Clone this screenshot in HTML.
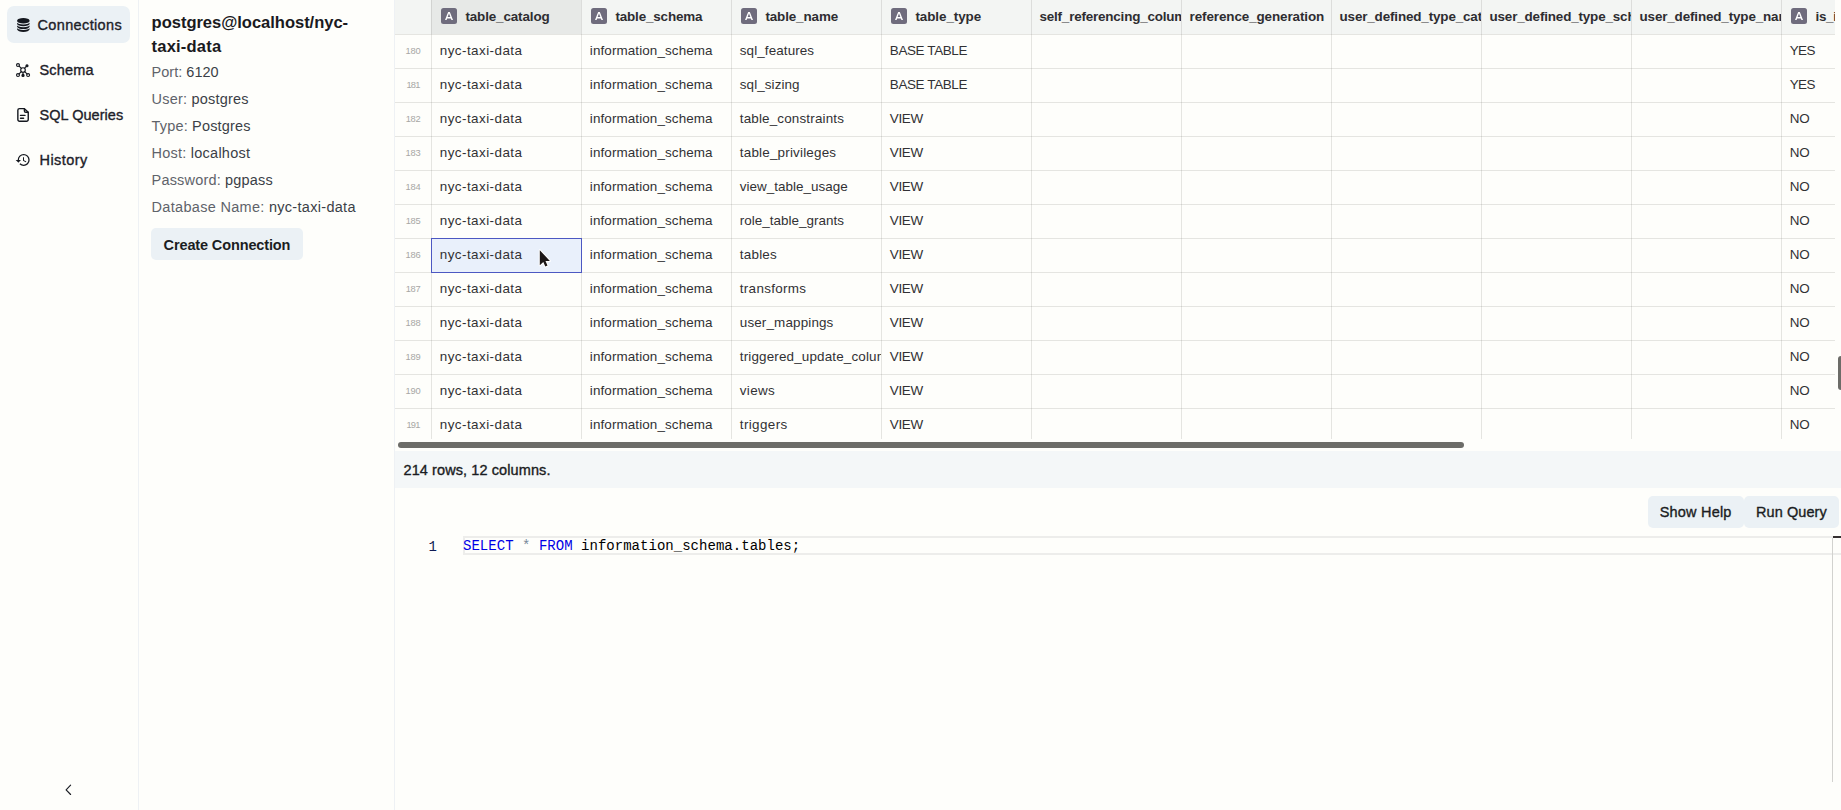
<!DOCTYPE html>
<html lang="en">
<head>
<meta charset="utf-8">
<title>SQL Client</title>
<style>
:root{--sans:"Liberation Sans",sans-serif;--mono:"Liberation Mono",monospace;}
*{box-sizing:border-box;margin:0;padding:0}
html,body{width:1841px;height:810px;overflow:hidden;background:#fefefb;font-family:var(--sans);color:#1c1c1c}
.abs{position:absolute}
.t{position:absolute;white-space:pre;line-height:1}
.t b{font-weight:inherit;color:#3b3f47}
#nav{position:absolute;left:0;top:0;width:139px;height:810px;border-right:1px solid #eef1f4}
#conn{position:absolute;left:0;top:0;width:395px;height:810px;border-right:1px solid #eef1f4;pointer-events:none}
#grid{position:absolute;left:395px;top:0;width:1440px;height:439px;overflow:hidden;background:#fefefb}
.hi{position:absolute;top:8px;width:16px;height:16px;border-radius:2.5px;background:#6f6c7d}
.hi svg{display:block}
</style>
</head>
<body>
<div id="nav">
<div class="abs" style="left:7px;top:6px;width:123px;height:37px;background:#ebf1f5;border-radius:7px;"></div>
<span id="t1" class="t nv" style="left:37.50px;top:18px;font-size:14.49px;-webkit-text-stroke:0.35px currentColor;color:#1d2129;letter-spacing:0.369px;">Connections</span>
<span id="t2" class="t nv" style="left:39.50px;top:63px;font-size:14.49px;-webkit-text-stroke:0.35px currentColor;color:#1d2129;letter-spacing:0.169px;">Schema</span>
<span id="t3" class="t nv" style="left:39.50px;top:108px;font-size:14.49px;-webkit-text-stroke:0.35px currentColor;color:#1d2129;letter-spacing:0.051px;">SQL Queries</span>
<span id="t4" class="t nv" style="left:39.50px;top:153px;font-size:14.49px;-webkit-text-stroke:0.35px currentColor;color:#1d2129;letter-spacing:0.455px;">History</span>
<svg class="abs" style="left:14.9px;top:17.1px" width="16.7" height="14.9" viewBox="0 0 16 16" preserveAspectRatio="none" fill="#15181f"><path d="M3.904 1.777C4.978 1.289 6.427 1 8 1s3.022.289 4.096.777C13.125 2.245 14 2.993 14 4s-.875 1.755-1.904 2.223C11.022 6.711 9.573 7 8 7s-3.022-.289-4.096-.777C2.875 5.755 2 5.007 2 4s.875-1.755 1.904-2.223"/><path d="M2 6.161V7c0 1.007.875 1.755 1.904 2.223C4.978 9.71 6.427 10 8 10s3.022-.289 4.096-.777C13.125 8.755 14 8.007 14 7v-.839c-.457.432-1.004.751-1.49.972C11.278 7.693 9.682 8 8 8s-3.278-.307-4.51-.867c-.486-.22-1.033-.54-1.49-.972"/><path d="M2 9.161V10c0 1.007.875 1.755 1.904 2.223C4.978 12.711 6.427 13 8 13s3.022-.289 4.096-.777C13.125 11.755 14 11.007 14 10v-.839c-.457.432-1.004.751-1.49.972-1.232.56-2.828.867-4.51.867s-3.278-.307-4.51-.867c-.486-.22-1.033-.54-1.49-.972"/><path d="M2 12.161V13c0 1.007.875 1.755 1.904 2.223C4.978 15.711 6.427 16 8 16s3.022-.289 4.096-.777C13.125 14.755 14 14.007 14 13v-.839c-.457.432-1.004.751-1.49.972-1.232.56-2.828.867-4.51.867s-3.278-.307-4.51-.867c-.486-.22-1.033-.54-1.49-.972"/></svg>
<svg class="abs" style="left:14px;top:61px" width="18" height="18" viewBox="14 61 18 18" fill="none" stroke="#15181f" stroke-width="1.15" stroke-linecap="round"><path d="M19.1 66.1 L21.4 68.3 M24.6 68.2 L26.4 66.4 M21.3 71.7 L19.1 73.9 M24.7 71.7 L27 73.9 M23 72.4 V74.2"/><circle cx="23" cy="70" r="2.3"/><circle cx="18" cy="65" r="1.45"/><circle cx="18" cy="75" r="1.45"/><circle cx="28.1" cy="75" r="1.45"/><circle cx="27" cy="65.7" r="1.0" fill="#15181f"/><circle cx="23" cy="75.4" r="1.05" fill="#15181f"/></svg>
<svg class="abs" style="left:14px;top:105px" width="18" height="20" viewBox="14 105 18 20" fill="none" stroke="#15181f" stroke-width="1.4" stroke-linecap="round" stroke-linejoin="round"><path d="M24.4 108.65 H19.5 A1.65 1.65 0 0 0 17.85 110.3 V119.55 A1.65 1.65 0 0 0 19.5 121.2 H26.6 A1.65 1.65 0 0 0 28.25 119.55 V112.3 Z"/><path d="M24.4 108.9 V110.9 A1.4 1.4 0 0 0 25.8 112.3 H28"/><path d="M20.5 115.4 H25 M20.5 118.2 H23.6"/></svg>
<svg class="abs" style="left:15.4px;top:152px" width="16" height="16" viewBox="0 0 24 24" fill="#15181f"><path d="M13 3a9 9 0 0 0-9 9H1l3.89 3.89.07.14L9 12H6c0-3.87 3.13-7 7-7s7 3.13 7 7-3.13 7-7 7c-1.93 0-3.68-.79-4.94-2.06l-1.42 1.42A8.954 8.954 0 0 0 13 21a9 9 0 0 0 0-18zm-1 5v5l4.28 2.54.72-1.21-3.5-2.08V8H12z"/></svg>
<svg class="abs" style="left:60px;top:780px" width="16" height="20" viewBox="60 780 16 20" fill="none" stroke="#1a1d24" stroke-width="1.15" stroke-linecap="round" stroke-linejoin="round"><path d="M70.6 785.2 L66.1 789.9 L70.6 794.5"/></svg>
</div>
<div id="conn">
<span id="t5" class="t ttl" style="left:151.60px;top:15px;font-size:16.56px;font-weight:700;color:#1a1a1e;letter-spacing:-0.035px;">postgres@localhost/nyc-</span>
<span id="t6" class="t ttl" style="left:151.60px;top:39px;font-size:16.56px;font-weight:700;color:#1a1a1e;letter-spacing:0.188px;">taxi-data</span>
<span id="t7" class="t dl" style="left:151.60px;top:65px;font-size:14.49px;color:#5f636a;letter-spacing:0.020px;">Port: <b>6120</b></span>
<span id="t8" class="t dl" style="left:151.60px;top:92px;font-size:14.49px;color:#5f636a;letter-spacing:0.214px;">User: <b>postgres</b></span>
<span id="t9" class="t dl" style="left:151.60px;top:119px;font-size:14.49px;color:#5f636a;letter-spacing:0.172px;">Type: <b>Postgres</b></span>
<span id="t10" class="t dl" style="left:151.60px;top:146px;font-size:14.49px;color:#5f636a;letter-spacing:0.237px;">Host: <b>localhost</b></span>
<span id="t11" class="t dl" style="left:151.60px;top:173px;font-size:14.49px;color:#5f636a;letter-spacing:0.182px;">Password: <b>pgpass</b></span>
<span id="t12" class="t dl" style="left:151.60px;top:200px;font-size:14.49px;color:#5f636a;letter-spacing:0.306px;">Database Name: <b>nyc-taxi-data</b></span>
<div class="abs" style="left:151px;top:228px;width:152px;height:32px;background:#ebf1f5;border-radius:5px;"></div>
<span id="t13" class="t bt" style="left:163.60px;top:238px;font-size:14.49px;font-weight:700;color:#1b1d22;letter-spacing:-0.120px;">Create Connection</span>
</div>
<div id="grid">
<div class="abs" style="left:0px;top:0px;width:1440px;height:34px;background:#f3f5f3;"></div>
<div class="abs" style="left:36px;top:0px;width:150px;height:34px;background:#e7e9e7;"></div>
<div class="abs" style="left:36px;top:238px;width:151px;height:35px;background:#e9f0fb;"></div>
<div class="abs" style="left:36px;top:0;width:150px;height:439px;overflow:hidden"><div class="hi" style="left:10px"><svg width="16" height="16" viewBox="0 0 16 16"><path transform="translate(-2 -2)" fill-rule="evenodd" d="M8.182 12.4h3.636l.655 1.6H14l-3.164-8H9.164L6 14h1.527l.655-1.6zM10 7.44l1.36 3.651H8.64L10 7.441z" fill="#fff"/></svg></div><span id="t14" class="t ht" style="left:34.40px;top:10px;font-size:13.45px;font-weight:700;color:#2e2d31;letter-spacing:-0.133px;">table_catalog</span><span id="t15" class="t ct" style="left:8.80px;top:44px;font-size:13.45px;color:#313134;letter-spacing:0.441px;">nyc-taxi-data</span><span id="t16" class="t ct" style="left:8.80px;top:78px;font-size:13.45px;color:#313134;letter-spacing:0.441px;">nyc-taxi-data</span><span id="t17" class="t ct" style="left:8.80px;top:112px;font-size:13.45px;color:#313134;letter-spacing:0.441px;">nyc-taxi-data</span><span id="t18" class="t ct" style="left:8.80px;top:146px;font-size:13.45px;color:#313134;letter-spacing:0.441px;">nyc-taxi-data</span><span id="t19" class="t ct" style="left:8.80px;top:180px;font-size:13.45px;color:#313134;letter-spacing:0.441px;">nyc-taxi-data</span><span id="t20" class="t ct" style="left:8.80px;top:214px;font-size:13.45px;color:#313134;letter-spacing:0.441px;">nyc-taxi-data</span><span id="t21" class="t ct" style="left:8.80px;top:248px;font-size:13.45px;color:#313134;letter-spacing:0.441px;">nyc-taxi-data</span><span id="t22" class="t ct" style="left:8.80px;top:282px;font-size:13.45px;color:#313134;letter-spacing:0.441px;">nyc-taxi-data</span><span id="t23" class="t ct" style="left:8.80px;top:316px;font-size:13.45px;color:#313134;letter-spacing:0.441px;">nyc-taxi-data</span><span id="t24" class="t ct" style="left:8.80px;top:350px;font-size:13.45px;color:#313134;letter-spacing:0.441px;">nyc-taxi-data</span><span id="t25" class="t ct" style="left:8.80px;top:384px;font-size:13.45px;color:#313134;letter-spacing:0.441px;">nyc-taxi-data</span><span id="t26" class="t ct" style="left:8.80px;top:418px;font-size:13.45px;color:#313134;letter-spacing:0.441px;">nyc-taxi-data</span></div>
<div class="abs" style="left:186px;top:0;width:150px;height:439px;overflow:hidden"><div class="hi" style="left:10px"><svg width="16" height="16" viewBox="0 0 16 16"><path transform="translate(-2 -2)" fill-rule="evenodd" d="M8.182 12.4h3.636l.655 1.6H14l-3.164-8H9.164L6 14h1.527l.655-1.6zM10 7.44l1.36 3.651H8.64L10 7.441z" fill="#fff"/></svg></div><span id="t27" class="t ht" style="left:34.40px;top:10px;font-size:13.45px;font-weight:700;color:#2e2d31;letter-spacing:-0.161px;">table_schema</span><span id="t28" class="t ct" style="left:8.80px;top:44px;font-size:13.45px;color:#313134;letter-spacing:0.106px;">information_schema</span><span id="t29" class="t ct" style="left:8.80px;top:78px;font-size:13.45px;color:#313134;letter-spacing:0.106px;">information_schema</span><span id="t30" class="t ct" style="left:8.80px;top:112px;font-size:13.45px;color:#313134;letter-spacing:0.106px;">information_schema</span><span id="t31" class="t ct" style="left:8.80px;top:146px;font-size:13.45px;color:#313134;letter-spacing:0.106px;">information_schema</span><span id="t32" class="t ct" style="left:8.80px;top:180px;font-size:13.45px;color:#313134;letter-spacing:0.106px;">information_schema</span><span id="t33" class="t ct" style="left:8.80px;top:214px;font-size:13.45px;color:#313134;letter-spacing:0.106px;">information_schema</span><span id="t34" class="t ct" style="left:8.80px;top:248px;font-size:13.45px;color:#313134;letter-spacing:0.106px;">information_schema</span><span id="t35" class="t ct" style="left:8.80px;top:282px;font-size:13.45px;color:#313134;letter-spacing:0.106px;">information_schema</span><span id="t36" class="t ct" style="left:8.80px;top:316px;font-size:13.45px;color:#313134;letter-spacing:0.106px;">information_schema</span><span id="t37" class="t ct" style="left:8.80px;top:350px;font-size:13.45px;color:#313134;letter-spacing:0.106px;">information_schema</span><span id="t38" class="t ct" style="left:8.80px;top:384px;font-size:13.45px;color:#313134;letter-spacing:0.106px;">information_schema</span><span id="t39" class="t ct" style="left:8.80px;top:418px;font-size:13.45px;color:#313134;letter-spacing:0.106px;">information_schema</span></div>
<div class="abs" style="left:336px;top:0;width:150px;height:439px;overflow:hidden"><div class="hi" style="left:10px"><svg width="16" height="16" viewBox="0 0 16 16"><path transform="translate(-2 -2)" fill-rule="evenodd" d="M8.182 12.4h3.636l.655 1.6H14l-3.164-8H9.164L6 14h1.527l.655-1.6zM10 7.44l1.36 3.651H8.64L10 7.441z" fill="#fff"/></svg></div><span id="t40" class="t ht" style="left:34.40px;top:10px;font-size:13.45px;font-weight:700;color:#2e2d31;letter-spacing:-0.128px;">table_name</span><span id="t41" class="t ct" style="left:8.80px;top:44px;font-size:13.45px;color:#313134;letter-spacing:0.099px;">sql_features</span><span id="t42" class="t ct" style="left:8.80px;top:78px;font-size:13.45px;color:#313134;letter-spacing:0.087px;">sql_sizing</span><span id="t43" class="t ct" style="left:8.80px;top:112px;font-size:13.45px;color:#313134;letter-spacing:0.157px;">table_constraints</span><span id="t44" class="t ct" style="left:8.80px;top:146px;font-size:13.45px;color:#313134;letter-spacing:0.194px;">table_privileges</span><span id="t45" class="t ct" style="left:8.80px;top:180px;font-size:13.45px;color:#313134;letter-spacing:0.025px;">view_table_usage</span><span id="t46" class="t ct" style="left:8.80px;top:214px;font-size:13.45px;color:#313134;letter-spacing:0.021px;">role_table_grants</span><span id="t47" class="t ct" style="left:8.80px;top:248px;font-size:13.45px;color:#313134;letter-spacing:0.219px;">tables</span><span id="t48" class="t ct" style="left:8.80px;top:282px;font-size:13.45px;color:#313134;letter-spacing:0.309px;">transforms</span><span id="t49" class="t ct" style="left:8.80px;top:316px;font-size:13.45px;color:#313134;letter-spacing:0.137px;">user_mappings</span><span id="t50" class="t ct" style="left:8.80px;top:350px;font-size:13.45px;color:#313134;letter-spacing:0.149px;">triggered_update_columns</span><span id="t51" class="t ct" style="left:8.80px;top:384px;font-size:13.45px;color:#313134;letter-spacing:0.341px;">views</span><span id="t52" class="t ct" style="left:8.80px;top:418px;font-size:13.45px;color:#313134;letter-spacing:0.371px;">triggers</span></div>
<div class="abs" style="left:486px;top:0;width:150px;height:439px;overflow:hidden"><div class="hi" style="left:10px"><svg width="16" height="16" viewBox="0 0 16 16"><path transform="translate(-2 -2)" fill-rule="evenodd" d="M8.182 12.4h3.636l.655 1.6H14l-3.164-8H9.164L6 14h1.527l.655-1.6zM10 7.44l1.36 3.651H8.64L10 7.441z" fill="#fff"/></svg></div><span id="t53" class="t ht" style="left:34.40px;top:10px;font-size:13.45px;font-weight:700;color:#2e2d31;letter-spacing:-0.072px;">table_type</span><span id="t54" class="t ct" style="left:8.80px;top:44px;font-size:13.45px;color:#313134;letter-spacing:-0.370px;">BASE TABLE</span><span id="t55" class="t ct" style="left:8.80px;top:78px;font-size:13.45px;color:#313134;letter-spacing:-0.370px;">BASE TABLE</span><span id="t56" class="t ct" style="left:8.80px;top:112px;font-size:13.45px;color:#313134;letter-spacing:-0.312px;">VIEW</span><span id="t57" class="t ct" style="left:8.80px;top:146px;font-size:13.45px;color:#313134;letter-spacing:-0.312px;">VIEW</span><span id="t58" class="t ct" style="left:8.80px;top:180px;font-size:13.45px;color:#313134;letter-spacing:-0.312px;">VIEW</span><span id="t59" class="t ct" style="left:8.80px;top:214px;font-size:13.45px;color:#313134;letter-spacing:-0.312px;">VIEW</span><span id="t60" class="t ct" style="left:8.80px;top:248px;font-size:13.45px;color:#313134;letter-spacing:-0.312px;">VIEW</span><span id="t61" class="t ct" style="left:8.80px;top:282px;font-size:13.45px;color:#313134;letter-spacing:-0.312px;">VIEW</span><span id="t62" class="t ct" style="left:8.80px;top:316px;font-size:13.45px;color:#313134;letter-spacing:-0.312px;">VIEW</span><span id="t63" class="t ct" style="left:8.80px;top:350px;font-size:13.45px;color:#313134;letter-spacing:-0.312px;">VIEW</span><span id="t64" class="t ct" style="left:8.80px;top:384px;font-size:13.45px;color:#313134;letter-spacing:-0.312px;">VIEW</span><span id="t65" class="t ct" style="left:8.80px;top:418px;font-size:13.45px;color:#313134;letter-spacing:-0.312px;">VIEW</span></div>
<div class="abs" style="left:636px;top:0;width:150px;height:439px;overflow:hidden"><span id="t66" class="t ht" style="left:8.50px;top:10px;font-size:13.45px;font-weight:700;color:#2e2d31;letter-spacing:-0.196px;">self_referencing_column_name</span></div>
<div class="abs" style="left:786px;top:0;width:150px;height:439px;overflow:hidden"><span id="t67" class="t ht" style="left:8.50px;top:10px;font-size:13.45px;font-weight:700;color:#2e2d31;letter-spacing:-0.098px;">reference_generation</span></div>
<div class="abs" style="left:936px;top:0;width:150px;height:439px;overflow:hidden"><span id="t68" class="t ht" style="left:8.50px;top:10px;font-size:13.45px;font-weight:700;color:#2e2d31;letter-spacing:-0.149px;">user_defined_type_catalog</span></div>
<div class="abs" style="left:1086px;top:0;width:150px;height:439px;overflow:hidden"><span id="t69" class="t ht" style="left:8.50px;top:10px;font-size:13.45px;font-weight:700;color:#2e2d31;letter-spacing:-0.163px;">user_defined_type_schema</span></div>
<div class="abs" style="left:1236px;top:0;width:150px;height:439px;overflow:hidden"><span id="t70" class="t ht" style="left:8.50px;top:10px;font-size:13.45px;font-weight:700;color:#2e2d31;letter-spacing:-0.148px;">user_defined_type_name</span></div>
<div class="abs" style="left:1386px;top:0;width:54px;height:439px;overflow:hidden"><div class="hi" style="left:10px"><svg width="16" height="16" viewBox="0 0 16 16"><path transform="translate(-2 -2)" fill-rule="evenodd" d="M8.182 12.4h3.636l.655 1.6H14l-3.164-8H9.164L6 14h1.527l.655-1.6zM10 7.44l1.36 3.651H8.64L10 7.441z" fill="#fff"/></svg></div><span id="t71" class="t ht" style="left:34.40px;top:10px;font-size:13.45px;font-weight:700;color:#2e2d31;letter-spacing:-0.240px;">is_insertable_into</span><span id="t72" class="t ct" style="left:8.80px;top:44px;font-size:13.45px;color:#313134;letter-spacing:-0.635px;">YES</span><span id="t73" class="t ct" style="left:8.80px;top:78px;font-size:13.45px;color:#313134;letter-spacing:-0.635px;">YES</span><span id="t74" class="t ct" style="left:8.80px;top:112px;font-size:13.45px;color:#313134;letter-spacing:-0.203px;">NO</span><span id="t75" class="t ct" style="left:8.80px;top:146px;font-size:13.45px;color:#313134;letter-spacing:-0.203px;">NO</span><span id="t76" class="t ct" style="left:8.80px;top:180px;font-size:13.45px;color:#313134;letter-spacing:-0.203px;">NO</span><span id="t77" class="t ct" style="left:8.80px;top:214px;font-size:13.45px;color:#313134;letter-spacing:-0.203px;">NO</span><span id="t78" class="t ct" style="left:8.80px;top:248px;font-size:13.45px;color:#313134;letter-spacing:-0.203px;">NO</span><span id="t79" class="t ct" style="left:8.80px;top:282px;font-size:13.45px;color:#313134;letter-spacing:-0.203px;">NO</span><span id="t80" class="t ct" style="left:8.80px;top:316px;font-size:13.45px;color:#313134;letter-spacing:-0.203px;">NO</span><span id="t81" class="t ct" style="left:8.80px;top:350px;font-size:13.45px;color:#313134;letter-spacing:-0.203px;">NO</span><span id="t82" class="t ct" style="left:8.80px;top:384px;font-size:13.45px;color:#313134;letter-spacing:-0.203px;">NO</span><span id="t83" class="t ct" style="left:8.80px;top:418px;font-size:13.45px;color:#313134;letter-spacing:-0.203px;">NO</span></div>
<span id="t84" class="t rn" style="left:0.00px;top:47px;font-size:9.31px;color:#a7a7a5;letter-spacing:-0.203px;width:36px;text-align:center;">180</span>
<span id="t85" class="t rn" style="left:0.00px;top:81px;font-size:9.31px;color:#a7a7a5;letter-spacing:-0.875px;width:36px;text-align:center;">181</span>
<span id="t86" class="t rn" style="left:0.00px;top:115px;font-size:9.31px;color:#a7a7a5;letter-spacing:-0.266px;width:36px;text-align:center;">182</span>
<span id="t87" class="t rn" style="left:0.00px;top:149px;font-size:9.31px;color:#a7a7a5;letter-spacing:-0.240px;width:36px;text-align:center;">183</span>
<span id="t88" class="t rn" style="left:0.00px;top:183px;font-size:9.31px;color:#a7a7a5;letter-spacing:-0.156px;width:36px;text-align:center;">184</span>
<span id="t89" class="t rn" style="left:0.00px;top:217px;font-size:9.31px;color:#a7a7a5;letter-spacing:-0.271px;width:36px;text-align:center;">185</span>
<span id="t90" class="t rn" style="left:0.00px;top:251px;font-size:9.31px;color:#a7a7a5;letter-spacing:-0.234px;width:36px;text-align:center;">186</span>
<span id="t91" class="t rn" style="left:0.00px;top:285px;font-size:9.31px;color:#a7a7a5;letter-spacing:-0.396px;width:36px;text-align:center;">187</span>
<span id="t92" class="t rn" style="left:0.00px;top:319px;font-size:9.31px;color:#a7a7a5;letter-spacing:-0.240px;width:36px;text-align:center;">188</span>
<span id="t93" class="t rn" style="left:0.00px;top:353px;font-size:9.31px;color:#a7a7a5;letter-spacing:-0.234px;width:36px;text-align:center;">189</span>
<span id="t94" class="t rn" style="left:0.00px;top:387px;font-size:9.31px;color:#a7a7a5;letter-spacing:-0.198px;width:36px;text-align:center;">190</span>
<span id="t95" class="t rn" style="left:0.00px;top:421px;font-size:9.31px;color:#a7a7a5;letter-spacing:-0.870px;width:36px;text-align:center;">191</span>
<div class="abs" style="left:0px;top:34px;width:1440px;height:1px;background:rgba(108,108,102,0.17);"></div>
<div class="abs" style="left:0px;top:68px;width:1440px;height:1px;background:rgba(108,108,102,0.17);"></div>
<div class="abs" style="left:0px;top:102px;width:1440px;height:1px;background:rgba(108,108,102,0.17);"></div>
<div class="abs" style="left:0px;top:136px;width:1440px;height:1px;background:rgba(108,108,102,0.17);"></div>
<div class="abs" style="left:0px;top:170px;width:1440px;height:1px;background:rgba(108,108,102,0.17);"></div>
<div class="abs" style="left:0px;top:204px;width:1440px;height:1px;background:rgba(108,108,102,0.17);"></div>
<div class="abs" style="left:0px;top:238px;width:1440px;height:1px;background:rgba(108,108,102,0.17);"></div>
<div class="abs" style="left:0px;top:272px;width:1440px;height:1px;background:rgba(108,108,102,0.17);"></div>
<div class="abs" style="left:0px;top:306px;width:1440px;height:1px;background:rgba(108,108,102,0.17);"></div>
<div class="abs" style="left:0px;top:340px;width:1440px;height:1px;background:rgba(108,108,102,0.17);"></div>
<div class="abs" style="left:0px;top:374px;width:1440px;height:1px;background:rgba(108,108,102,0.17);"></div>
<div class="abs" style="left:0px;top:408px;width:1440px;height:1px;background:rgba(108,108,102,0.17);"></div>
<div class="abs" style="left:0px;top:442px;width:1440px;height:1px;background:rgba(108,108,102,0.17);"></div>
<div class="abs" style="left:36px;top:0px;width:1px;height:439px;background:rgba(108,108,102,0.17);"></div>
<div class="abs" style="left:186px;top:0px;width:1px;height:439px;background:rgba(108,108,102,0.17);"></div>
<div class="abs" style="left:336px;top:0px;width:1px;height:439px;background:rgba(108,108,102,0.17);"></div>
<div class="abs" style="left:486px;top:0px;width:1px;height:439px;background:rgba(108,108,102,0.17);"></div>
<div class="abs" style="left:636px;top:0px;width:1px;height:439px;background:rgba(108,108,102,0.17);"></div>
<div class="abs" style="left:786px;top:0px;width:1px;height:439px;background:rgba(108,108,102,0.17);"></div>
<div class="abs" style="left:936px;top:0px;width:1px;height:439px;background:rgba(108,108,102,0.17);"></div>
<div class="abs" style="left:1086px;top:0px;width:1px;height:439px;background:rgba(108,108,102,0.17);"></div>
<div class="abs" style="left:1236px;top:0px;width:1px;height:439px;background:rgba(108,108,102,0.17);"></div>
<div class="abs" style="left:1386px;top:0px;width:1px;height:439px;background:rgba(108,108,102,0.17);"></div>
<div class="abs" style="left:36px;top:238px;width:151px;height:35px;background:transparent;border:1px solid #4c58c2;"></div>
</div>
<div class="abs" style="left:398px;top:442px;width:1066px;height:6px;background:#6c6c68;border-radius:3px;"></div>
<div class="abs" style="left:1838px;top:356px;width:6px;height:34px;background:#6c6c68;border-radius:3px;"></div>
<div class="abs" style="left:395px;top:451px;width:1446px;height:37px;background:#f4f7f8;"></div>
<span id="t96" class="t st" style="left:403.50px;top:463px;font-size:14.49px;-webkit-text-stroke:0.35px currentColor;color:#1a1c22;letter-spacing:0.100px;">214 rows, 12 columns.</span>
<div class="abs" style="left:1648px;top:496px;width:96px;height:32px;background:#ebf1f5;border-radius:5px;"></div>
<div class="abs" style="left:1744.4px;top:496px;width:94.8px;height:32px;background:#ebf1f5;border-radius:5px;"></div>
<span id="t97" class="t bt" style="left:1659.75px;top:505px;font-size:14.49px;-webkit-text-stroke:0.35px currentColor;color:#1b1d22;letter-spacing:0.201px;">Show Help</span>
<span id="t98" class="t bt" style="left:1756.00px;top:505px;font-size:14.49px;-webkit-text-stroke:0.35px currentColor;color:#1b1d22;letter-spacing:0.078px;">Run Query</span>
<div class="abs" style="left:463px;top:536px;width:1378px;height:19px;background:transparent;border:2px solid #ededeb;border-right:0;"></div>
<div class="abs" style="left:1832px;top:538px;width:1px;height:244px;background:#d2d2cf;"></div>
<div class="abs" style="left:1833px;top:536px;width:8px;height:2px;background:#353031;"></div>
<span class="t" style="font-family:var(--mono);left:428.6px;top:540px;font-size:14px;letter-spacing:0.028px;color:#0f1a52">1</span>
<span class="t" style="font-family:var(--mono);left:463px;top:539px;font-size:14px;letter-spacing:0.028px;color:#000"><span style="color:#0000e6">SELECT</span> <span style="color:#778899">*</span> <span style="color:#0000e6">FROM</span> information_schema.tables;</span>
<svg class="abs" style="left:535px;top:245px" width="20" height="26" viewBox="535 245 20 26"><path d="M539.8 250.2 V265.3 L543.3 262 L545.3 266.6 L547.5 265.6 L545.5 261 H549.9 Z" fill="#1b1718" stroke="#fff" stroke-width="2" stroke-linejoin="round" paint-order="stroke"/></svg>
</body>
</html>
